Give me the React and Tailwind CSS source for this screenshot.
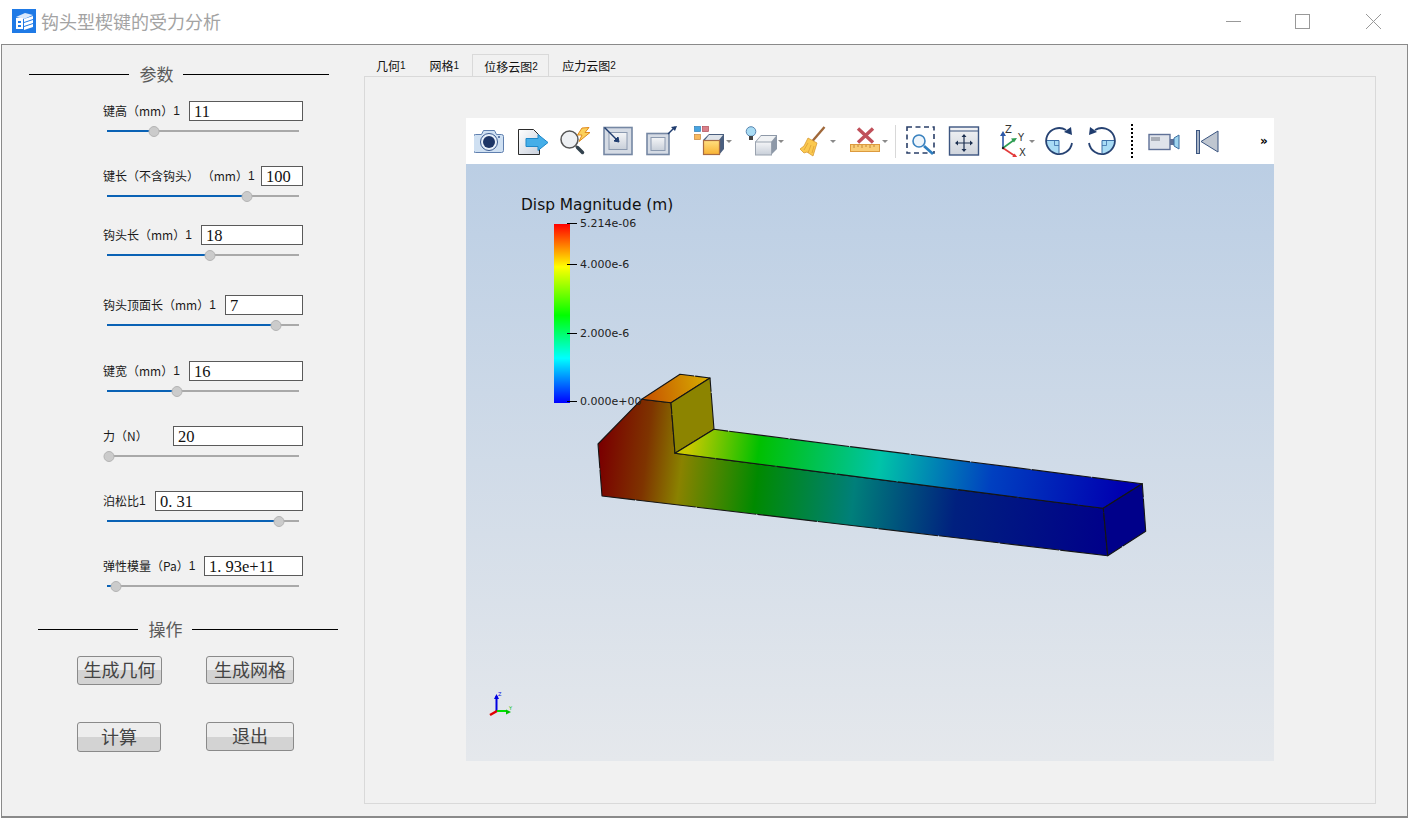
import React from "react";

const CJK = "font-['Noto_Sans_CJK_SC','Liberation_Sans',sans-serif]";

const rows = [
  { label: "键高（mm）", n: "1", v: "11", w: "w-[114px]", mt: "mt-[17px]", x: 47 },
  { label: "键长（不含钩头）\u00a0（mm）", n: "1", v: "100", w: "w-[42px]", mt: "mt-[34px]", x: 139.5 },
  { label: "钩头长（mm）", n: "1", v: "18", w: "w-[102px]", mt: "mt-[28px]", x: 103 },
  { label: "钩头顶面长（mm）", n: "1", v: "7", w: "w-[78px]", mt: "mt-[39px]", x: 168.5 },
  { label: "键宽（mm）", n: "1", v: "16", w: "w-[114px]", mt: "mt-[35px]", x: 69.5 },
  { label: "力（N）", n: "", v: "20", w: "w-[130px]", mt: "mt-[34px]", x: 1.5 },
  { label: "泊松比", n: "1", v: "0. 31", w: "w-[148px]", mt: "mt-[34px]", x: 171.5 },
  { label: "弹性模量（Pa）", n: "1", v: "1. 93e+11", w: "w-[99px]", mt: "mt-[34px]", x: 9 },
];

function Row({ r }) {
  return (
    <div className={`${r.mt} ml-[101px] w-[200px]`}>
      <div className="flex h-[20px] items-center justify-between">
        <div className={`${CJK} -mt-[1px] flex items-center text-[12px] leading-[20px] text-[#1a1a1a]`}>
          <span>{r.label}</span>
          {r.n && <span className="font-['Liberation_Sans',sans-serif] text-[12px]">{r.n}</span>}
        </div>
        <input
          readOnly
          value={r.v}
          className={`${r.w} h-[20px] border border-[#5a5a5a] bg-white pl-[4px] pt-[1px] font-['Liberation_Serif',serif] text-[16.5px] leading-[20px] text-[#111] outline-none`}
        />
      </div>
      <div className="relative ml-[4px] mt-[9px] h-[2px] w-[192px] bg-[#a9a9a9]">
        <div className="h-full bg-[#0a62b5]" style={{ width: r.x }} />
        <div
          className="absolute top-[-4.5px] h-[11px] w-[11px] -translate-x-1/2 rounded-full border border-[#b4b4b4] bg-[#cbcbcb]"
          style={{ left: r.x }}
        />
      </div>
    </div>
  );
}

function Heading({ text, cls }) {
  return (
    <div className={`flex h-[20px] items-center ${cls}`}>
      <div className="h-px w-[100px] bg-black" />
      <span className={`${CJK} ml-[10px] mr-[9px] w-[35px] text-center text-[17px] leading-[20px] text-[#5a5a5a] whitespace-nowrap`}>{text}</span>
      <div className="h-px w-[146px] bg-black" />
    </div>
  );
}

function Btn({ children, cls }) {
  return (
    <button className={`${cls} ${CJK} shrink-0 rounded-[3px] border border-[#8a8a8a] bg-[linear-gradient(180deg,#ededed_0%,#ededed_50%,#d3d3d3_50%,#d3d3d3_100%)] pb-[3px] text-[18px] leading-none text-[#444]`}>
      {children}
    </button>
  );
}

function I({ x, w, cls, children }) {
  return (
    <svg viewBox={`${x} 125 ${w} 32`} width={w} height={32} className={`${cls} shrink-0`} fill="none">
      {children}
    </svg>
  );
}

const Caret = ({ x }) => <path d={`M${x - 3} 140h6l-3 3z`} fill="#8a8a8a" />;

function Toolbar() {
  return (
    <div className="flex h-[46px] items-center bg-white">
      <I x={474} w={30} cls="ml-[8px]">
        <path d="M475.5 134.500h6l2-4h11l2 4h5a2 2 0 0 1 2 2v14a2 2 0 0 1-2 2h-26a2 2 0 0 1-2-2v-14a2 2 0 0 1 2-2z" fill="#cfe0f2" stroke="#5f7fae" />
        <circle cx="489" cy="142" r="8.500" fill="#e8f0f9" stroke="#3b5a90" />
        <circle cx="489" cy="142" r="6" fill="#1d3566" />
        <circle cx="499" cy="137" r="1" fill="#3b5a90" />
      </I>
      <I x={518} w={31} cls="ml-[14px]">
        <defs>
          <linearGradient id="docg" x1="0" y1="0" x2="1" y2="1">
            <stop offset="0" stopColor="#fff" />
            <stop offset="1" stopColor="#c9d0dc" />
          </linearGradient>
        </defs>
        <path d="M518.500 129.500h15l6 6v19h-21z" fill="url(#docg)" stroke="#2b2b2b" />
        <path d="M526 138.500h12v-4l10 8-10 8v-4h-12z" fill="#45aee8" stroke="#1e88c9" />
      </I>
      <I x={560} w={32} cls="ml-[11px]">
        <circle cx="569.500" cy="139.500" r="8.500" fill="#eef0f3" stroke="#555" strokeWidth="1.500" />
        <path d="M575.500 145.500l2 2" stroke="#777" strokeWidth="2" />
        <path d="M577.500 147.500l5 5" stroke="#33424d" strokeWidth="3.500" strokeLinecap="round" />
        <path d="M589 127.500l-7 .5-4.500 7h4.500l-3 6.500 11-9h-5l4-5z" fill="#fbd05a" stroke="#e08a1e" />
      </I>
      <I x={603} w={31} cls="ml-[11px]">
        <defs>
          <linearGradient id="boxg" x1="0" y1="0" x2="0" y2="1">
            <stop offset="0" stopColor="#f4f5f7" />
            <stop offset="1" stopColor="#c8cfd9" />
          </linearGradient>
        </defs>
        <rect x="604" y="127.500" width="28" height="27" fill="#d5dbe4" stroke="#7587a3" strokeWidth="1.600" />
        <rect x="609" y="132.500" width="18" height="17" fill="url(#boxg)" stroke="#8c9ab0" />
        <path d="M604.500 127.500l13 13" stroke="#1f3c6e" strokeWidth="1.400" />
        <path d="M619 142l-5-1 4-4z" fill="#1f3c6e" stroke="#1f3c6e" />
      </I>
      <I x={646} w={32} cls="ml-[12px]">
        <rect x="647" y="133.500" width="22" height="21" fill="#d5dbe4" stroke="#7587a3" strokeWidth="1.600" />
        <rect x="651" y="137.500" width="14" height="13" fill="url(#boxg)" stroke="#8c9ab0" />
        <path d="M668 134l7-7" stroke="#1f3c6e" strokeWidth="1.400" />
        <path d="M677 126l-6 1 4 4z" fill="#1f3c6e" />
      </I>
      <I x={693} w={41} cls="ml-[15px]">
        <defs>
          <linearGradient id="orng" x1="0" y1="0" x2="0" y2="1">
            <stop offset="0" stopColor="#ffdf80" />
            <stop offset="1" stopColor="#f9b233" />
          </linearGradient>
        </defs>
        <rect x="694.500" y="126.500" width="6" height="5" fill="#47a3e0" stroke="#2f7fb8" strokeWidth=".7" />
        <rect x="702.500" y="126.500" width="6" height="5" fill="#d9808a" stroke="#b04a55" strokeWidth=".7" />
        <rect x="694.500" y="134.500" width="6" height="5" fill="#f7b95f" stroke="#c8843a" strokeWidth=".7" />
        <path d="M703 140l6-6h15v15l-5 6z" fill="#4a5f7f" />
        <path d="M709 135h14l-4 5h-14z" fill="#dfe4ea" />
        <rect x="703.500" y="140.500" width="16" height="14" fill="url(#orng)" stroke="#a86c44" strokeWidth="1.200" />
        <Caret x={729} />
      </I>
      <I x={745} w={41} cls="ml-[11px]">
        <circle cx="751" cy="131.500" r="4.800" fill="#a9dcf4" stroke="#5a86b0" />
        <path d="M749 136h4v4h-4z" fill="#444" />
        <path d="M755 142l6-7h16v14l-6 6z" fill="#8e99a8" />
        <path d="M761 136h15l-5 6h-15z" fill="#f0f2f4" />
        <rect x="755.500" y="142" width="16" height="13" fill="url(#boxg)" stroke="#9aa3af" />
        <Caret x={781} />
      </I>
      <I x={798} w={40} cls="ml-[12px]">
        <path d="M824.500 127l-12 14" stroke="#a0683a" strokeWidth="2.400" />
        <path d="M808 138l9 5-4 13-6-4-3 1-4-4 4-3z" fill="#fbc94f" stroke="#d89a34" strokeWidth=".8" />
        <path d="M808 143l-4 7M811 145l-3 8M814 146l-2 7" stroke="#d89a34" strokeWidth=".7" />
        <Caret x={833} />
      </I>
      <I x={849} w={41} cls="ml-[11px]">
        <path d="M858 128.500l15 14M873 128.500l-15 14" stroke="#c0505a" strokeWidth="3.400" />
        <rect x="850.500" y="144.500" width="29" height="7" fill="#f9cd76" stroke="#dc9a3e" />
        <path d="M854 145v3M858 145v2M862 145v3M866 145v2M870 145v3M874 145v2" stroke="#b87428" strokeWidth=".8" />
        <Caret x={885} />
      </I>
      <div className="ml-[5px] h-[33px] w-px bg-[#d8d8d8]" />
      <I x={906} w={31} cls="ml-[10px]">
        <rect x="907" y="127" width="27" height="26" stroke="#2a3f68" strokeWidth="1.600" strokeDasharray="5 3.500" />
        <circle cx="919" cy="141" r="6" fill="#eef5fb" stroke="#3a82bf" strokeWidth="1.600" />
        <path d="M924 146l9 8" stroke="#2f7fc0" strokeWidth="2.800" />
      </I>
      <I x={948} w={32} cls="ml-[11px]">
        <defs>
          <linearGradient id="mvg" x1="0" y1="0" x2="0" y2="1">
            <stop offset="0" stopColor="#f2f3f5" />
            <stop offset="1" stopColor="#cfd4dc" />
          </linearGradient>
        </defs>
        <rect x="949.500" y="127" width="29" height="28" fill="url(#mvg)" stroke="#3c5580" strokeWidth="1.400" />
        <path d="M950 131h28" stroke="#3c5580" />
        <path d="M964 135v16M956 143h16" stroke="#1d3050" strokeWidth="1.200" />
        <path d="M964 134l-2.500 3h5zM964 152l-2.500-3h5zM955 143l3-2.500v5zM973 143l-3-2.500v5z" fill="#1d3050" />
      </I>
      <I x={1000} w={37} cls="ml-[20px]">
        <path d="M1003 148v-15" stroke="#2d58a8" strokeWidth="1.600" />
        <path d="M1003 131l-3 5h6z" fill="#2d58a8" />
        <path d="M1003 148l11-8" stroke="#2e9d52" strokeWidth="1.600" />
        <path d="M1017 138l-6 .5 3 4z" fill="#2e9d52" />
        <path d="M1003 148l12 8" stroke="#e33a3a" strokeWidth="1.600" />
        <path d="M1018 158l-6-.5 2.500-4z" fill="#e33a3a" />
        <circle cx="1003" cy="148" r="1.200" fill="#222" />
        <text x="1005" y="133" fontSize="10" fill="#333" fontFamily="DejaVu Sans">Z</text>
        <text x="1018" y="141" fontSize="10" fill="#333" fontFamily="DejaVu Sans">Y</text>
        <text x="1019" y="156" fontSize="10" fill="#333" fontFamily="DejaVu Sans">X</text>
        <Caret x={1032} />
      </I>
      <I x={1044} w={30} cls="ml-[7px]">
        <path d="M1059 141h-12.500a12.500 12.500 0 0 0 12.500 12.500z" fill="#a9dcf5" />
        <path d="M1046.500 140.500h12.500v13" stroke="#3b6fa8" />
        <path d="M1054.500 141v4.500h4.500" stroke="#3b6fa8" strokeWidth=".8" />
        <path d="M1066 130a13 13 0 1 0 6 13" stroke="#264272" strokeWidth="1.800" />
        <path d="M1072 135l-1-8-7 5z" fill="#1f3c6e" />
      </I>
      <I x={1087} w={30} cls="ml-[13px]">
        <path d="M1102 141h12.500a12.500 12.500 0 0 1-12.500 12.500z" fill="#a9dcf5" />
        <path d="M1114.500 140.500h-12.500v13" stroke="#3b6fa8" />
        <path d="M1106.500 141v4.500h-4.500" stroke="#3b6fa8" strokeWidth=".8" />
        <path d="M1095 130a13 13 0 1 1-6 13" stroke="#264272" strokeWidth="1.800" />
        <path d="M1089 135l1-8 7 5z" fill="#1f3c6e" />
      </I>
      <div className="ml-[14px] h-[34px] w-0 border-l-2 border-dotted border-black" />
      <I x={1147} w={34} cls="ml-[14px]">
        <rect x="1149" y="134.500" width="21" height="15" fill="#dfe3ea" stroke="#5f7197" strokeWidth="1.400" />
        <rect x="1151" y="137" width="9" height="4" fill="#a9aeb7" />
        <path d="M1170 139h4v6h-4z" fill="#5f7197" />
        <path d="M1174 138l5-3v14l-5-3z" fill="#9ed4ee" stroke="#3a6c9f" />
      </I>
      <I x={1195} w={25} cls="ml-[14px]">
        <rect x="1196.500" y="130.500" width="3" height="23" fill="#a8b4c6" stroke="#3b5580" />
        <path d="M1218 131v21l-17-10.500z" fill="#bfc6d0" stroke="#3b5580" />
      </I>
      <span className="ml-[40px] font-['DejaVu_Sans',sans-serif] text-[12px] font-bold leading-none text-black">»</span>
    </div>
  );
}

function Model() {
  return (
    <svg viewBox="466 164 808 597" width="808" height="597" className="absolute inset-0">
      <defs>
        <linearGradient id="front" gradientUnits="userSpaceOnUse" x1="598" y1="470" x2="1108" y2="530">
          <stop offset="0" stopColor="#7a0000" />
          <stop offset=".09" stopColor="#7e3400" />
          <stop offset=".16" stopColor="#8a8200" />
          <stop offset=".31" stopColor="#008a00" />
          <stop offset=".5" stopColor="#007f7a" />
          <stop offset=".7" stopColor="#00207f" />
          <stop offset="1" stopColor="#00008a" />
        </linearGradient>
        <linearGradient id="top" gradientUnits="userSpaceOnUse" x1="690" y1="440" x2="1120" y2="500">
          <stop offset="0" stopColor="#c9c900" />
          <stop offset=".16" stopColor="#00c000" />
          <stop offset=".44" stopColor="#00c4a8" />
          <stop offset=".7" stopColor="#0040c0" />
          <stop offset="1" stopColor="#0000b0" />
        </linearGradient>
        <linearGradient id="hook" gradientUnits="userSpaceOnUse" x1="650" y1="395" x2="705" y2="385">
          <stop offset="0" stopColor="#c85a00" />
          <stop offset="1" stopColor="#d6a800" />
        </linearGradient>
      </defs>
      <g stroke="#151515" strokeWidth="1.100" strokeLinejoin="round" strokeDasharray="60 1">
        <polygon points="598,444 641.700,399.300 671,402.700 675,453.300 1103.300,508.300 1107.700,555.700 602,496" fill="url(#front)" />
        <polygon points="641.700,399.300 680,374.300 710,378 671,402.700" fill="url(#hook)" />
        <polygon points="671,402.700 710,378 714,429.300 675,453.300" fill="#8c8400" />
        <polygon points="675,453.300 714,429.300 1142.300,483.700 1103.300,508.300" fill="url(#top)" />
        <polygon points="1103.300,508.300 1142.300,483.700 1145.700,531.300 1107.700,555.700" fill="#00008a" />
      </g>
      <g strokeWidth="2">
        <path d="M496.500 711v-15" stroke="#0000e0" />
        <path d="M496.500 694l-2.500 5h5z" fill="#0000e0" />
        <path d="M497 711l-7 4" stroke="#e00000" strokeWidth="2.500" />
        <path d="M497 711h10" stroke="#00e000" />
        <path d="M511 712l-5-2.500v5z" fill="#00c000" />
        <text x="498" y="696" fontSize="5" fill="#0000e0" fontFamily="DejaVu Sans">Z</text>
        <text x="509" y="710" fontSize="5" fill="#00c000" fontFamily="DejaVu Sans">Y</text>
      </g>
    </svg>
  );
}

function Canvas() {
  const ticks = [
    { t: "5.214e-06", cls: "top-[54px]" },
    { t: "4.000e-6", cls: "top-[95px]" },
    { t: "2.000e-6", cls: "top-[164px]" },
    { t: "0.000e+00", cls: "top-[232px]" },
  ];
  return (
    <div className="relative flex-1 bg-[linear-gradient(180deg,#bbcee4_0%,#e5e8ec_100%)]">
      <Model />
      <div className="absolute left-[55px] top-[32px] font-['DejaVu_Sans',sans-serif] text-[15.4px] leading-[18px] text-[#111] whitespace-nowrap">
        Disp Magnitude (m)
      </div>
      <div className="absolute left-[88px] top-[60px] h-[179px] w-[16px] bg-[linear-gradient(180deg,#ff0000_0%,#ffff00_24%,#00ff00_51%,#00ffff_75%,#0000ff_100%)]" />
      {ticks.map((k) => (
        <div key={k.t} className={`absolute left-[101px] ${k.cls} flex items-center`}>
          <div className="h-px w-[10px] bg-black" />
          <span className="ml-[3px] font-['DejaVu_Sans',sans-serif] text-[11px] leading-none text-[#222] whitespace-nowrap">{k.t}</span>
        </div>
      ))}
    </div>
  );
}

function Tab({ children, n, active, cls }) {
  return (
    <div
      className={`${cls} ${CJK} flex h-[22px] items-center whitespace-nowrap pt-[2px] text-[12px] leading-none text-[#111] ${active ? "w-[77px] border-x border-t border-[#d9d9d9] bg-[#f1f1f1] pl-[11px]" : "px-[12px]"}`}
    >
      {children}
      <span className="font-['Liberation_Sans',sans-serif] text-[10px]">{n}</span>
    </div>
  );
}

export default function App() {
  return (
    <div className="flex h-[818px] w-[1408px] flex-col overflow-hidden bg-white">
      <div className="flex h-[44px] items-center pb-[2px]">
        <svg viewBox="0 0 24 24" width="24" height="24" className="ml-[12px] shrink-0">
          <rect width="24" height="24" fill="#1f7ae6" />
          <path d="M4 8l9-4 8 2-9 4z" fill="#dbe9fb" />
          <path d="M4 9h7v11H4z" fill="#fff" />
          <path d="M6 12h3v2H6zM6 16h3v2H6z" fill="#1f7ae6" />
          <path d="M12 10l9-3v3l-9 3zM12 14l9-3v3l-9 3zM12 18l9-3v3l-9 3z" fill="#fff" />
        </svg>
        <span className={`${CJK} ml-[5px] text-[18px] leading-none text-[#a3a3a3]`}>钩头型楔键的受力分析</span>
        <svg viewBox="1226 14 155 15" width="155" height="15" className="ml-auto mr-[27px] mt-[1px] shrink-0" fill="none" stroke="#999">
          <path d="M1226 21.500h15" />
          <rect x="1295.500" y="14.500" width="14" height="14" />
          <path d="M1366 14l15 15M1381 14l-15 15" />
        </svg>
      </div>
      <div className="ml-px flex h-[774px] border-x border-t-[1px] border-b-2 border-[#8a8a8a] bg-[#f1f1f1]">
        <div className="w-[362px] shrink-0">
          <Heading text="参数" cls="mt-[19px] ml-[27px]" />
          {rows.map((r) => (
            <Row key={r.label} r={r} />
          ))}
          <Heading text="操作" cls="mt-[32px] ml-[36px]" />
          <div className="ml-[75px] mt-[17px] flex items-start">
            <Btn cls="h-[29px] w-[85px]">生成几何</Btn>
            <Btn cls="ml-[44px] h-[28px] w-[88px]">生成网格</Btn>
          </div>
          <div className="ml-[75px] mt-[37px] flex items-start">
            <Btn cls="h-[30px] w-[84px]">计算</Btn>
            <Btn cls="ml-[45px] h-[29px] w-[88px]">退出</Btn>
          </div>
        </div>
        <div className="mt-[9px] w-[1012px] shrink-0">
          <div className="flex h-[22px] items-end">
            <Tab n="1">几何</Tab>
            <Tab n="1">网格</Tab>
            <Tab n="2" active cls="ml-[1px]">位移云图</Tab>
            <Tab n="2" cls="ml-px">应力云图</Tab>
          </div>
          <div className="h-[728px] border border-[#d9d9d9] pl-[101px] pt-[41px]">
            <div className="flex h-[643px] w-[808px] flex-col">
              <Toolbar />
              <Canvas />
            </div>
          </div>
        </div>
      </div>
    </div>
  );
}
